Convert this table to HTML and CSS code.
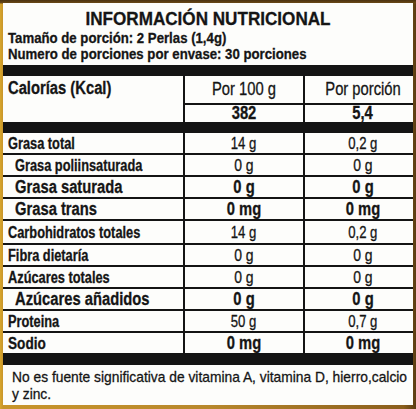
FILE: index.html
```html
<!DOCTYPE html>
<html lang="es">
<head>
  <meta charset="UTF-8" />
  <meta name="viewport" content="width=device-width, initial-scale=1.0" />
  <title>Información nutricional</title>
  <link rel="stylesheet" href="styles.css">
</head>
<body>
  <div class="label">
    <h1 class="title"><span>INFORMACIÓN NUTRICIONAL</span></h1>
    <p class="serving"><span>Tamaño de porción: 2 Perlas (1,4g)</span></p>
    <p class="serving"><span>Numero de porciones por envase: 30 porciones</span></p>

    <div class="facts">
      <div class="bar"></div>

      <div class="cell name kcal"><span>Calorías (Kcal)</span></div>
      <div class="cell val head"><span>Por 100 g</span></div>
      <div class="cell val right head"><span>Por porción</span></div>
      <div class="cell val big"><span>382</span></div>
      <div class="cell val right big"><span>5,4</span></div>

      <div class="bar"></div>

      <div class="cell name"><span>Grasa total</span></div>
      <div class="cell val"><span>14 g</span></div>
      <div class="cell val right"><span>0,2 g</span></div>

      <div class="cell name sub"><span>Grasa poliinsaturada</span></div>
      <div class="cell val mid"><span>0 g</span></div>
      <div class="cell val right mid"><span>0 g</span></div>

      <div class="cell name sub big"><span>Grasa saturada</span></div>
      <div class="cell val big"><span>0 g</span></div>
      <div class="cell val right big"><span>0 g</span></div>

      <div class="cell name sub big"><span>Grasa trans</span></div>
      <div class="cell val big"><span>0 mg</span></div>
      <div class="cell val right big"><span>0 mg</span></div>

      <div class="cell name"><span>Carbohidratos totales</span></div>
      <div class="cell val"><span>14 g</span></div>
      <div class="cell val right"><span>0,2 g</span></div>

      <div class="cell name"><span>Fibra dietaría</span></div>
      <div class="cell val mid"><span>0 g</span></div>
      <div class="cell val right mid"><span>0 g</span></div>

      <div class="cell name"><span>Azúcares totales</span></div>
      <div class="cell val mid"><span>0 g</span></div>
      <div class="cell val right mid"><span>0 g</span></div>

      <div class="cell name sub big"><span>Azúcares añadidos</span></div>
      <div class="cell val big"><span>0 g</span></div>
      <div class="cell val right big"><span>0 g</span></div>

      <div class="cell name"><span>Proteina</span></div>
      <div class="cell val"><span>50 g</span></div>
      <div class="cell val right"><span>0,7 g</span></div>

      <div class="cell name sodio"><span>Sodio</span></div>
      <div class="cell val big"><span>0 mg</span></div>
      <div class="cell val right big"><span>0 mg</span></div>

      <div class="bar"></div>

      <div class="note"><span>No es fuente significativa de vitamina A, vitamina D, hierro,calcio</span><span>y zinc.</span></div>
    </div>
  </div>
</body>
</html>
```

FILE: styles.css
```css
body {
  margin: 0;
  height: 409px;
  overflow: hidden;
  font-family: "Liberation Sans", Arial, sans-serif;
  color: #151515;
  background:
    linear-gradient(180deg, #4a3210 0, #6a4816 3px, transparent 4px),
    linear-gradient(90deg, #d8a62c 0, #c8952a 3px, #b8882c 50%, #8a5e1c 97%, #5a3c12 100%);
}
/* el texto de la etiqueta es condensado */
span {
  display: inline-block;
  white-space: nowrap;
  transform: scaleX(.82);
  transform-origin: left center;
  -webkit-text-stroke: .3px currentColor;
}
.label {
  width: 410px;
  margin: 3px 0 0 3px;
  background: #fdfdfb;
}
.title {
  margin: 0;
  padding-top: 7px;
  font-size: 18px;
  line-height: 19px;
  font-weight: bold;
  text-align: center;
}
.title span {
  transform: scaleX(.95);
  transform-origin: center;
}
.serving {
  margin: 0;
  padding-left: 5px;
  font-size: 15px;
  line-height: 16px;
  font-weight: bold;
}
.serving span {
  transform: scaleX(.88);
}
.serving:first-of-type {
  margin-top: 1px;
}
.facts {
  display: grid;
  grid-template-columns: 180px 118px 1fr;
  grid-template-rows: 9px 27px 17px 7px 20px 20px 20px 20px 22px 20px 20px 20px 20px 20px 8px auto;
  gap: 2px;
  margin-top: 3px;
  background: #141414;
}
.bar {
  grid-column: 1 / -1;
}
.cell {
  display: flex;
  align-items: center;
  background: #fdfdfb;
  font-size: 16px;
  line-height: 17px;
}
.name {
  padding-left: 5px;
  font-weight: bold;
}
.name span {
  transform: scaleX(.8);
}
.name.sub {
  padding-left: 12px;
}
.name.big span,
.name.kcal span {
  transform: scaleX(.82);
}
.name.kcal {
  grid-row: span 2;
  align-items: flex-start;
  padding-top: 4px;
  font-size: 18px;
}
.name.sodio {
  font-size: 17px;
}
.val {
  justify-content: center;
}
.val span {
  transform-origin: center;
}
.val.right {
  padding-left: 8px;
}
.mid {
  font-size: 17px;
}
.big {
  font-size: 18px;
  font-weight: bold;
}
.head {
  font-size: 18px;
}
.note {
  grid-column: 1 / -1;
  display: flex;
  flex-direction: column;
  align-items: flex-start;
  overflow: hidden;
  background: #fdfdfb;
  padding: 3px 0 3px 9px;
  font-size: 15px;
  line-height: 17px;
}
.note span {
  transform: scaleX(.92);
}
```
